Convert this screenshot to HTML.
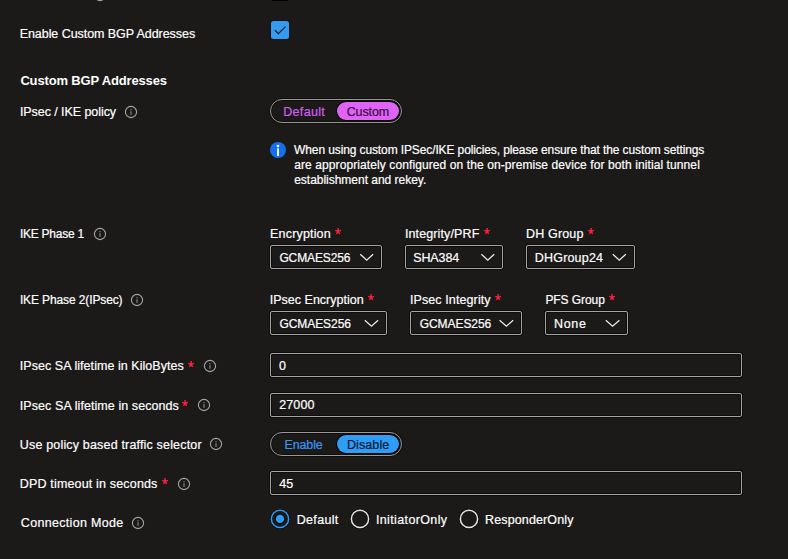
<!DOCTYPE html>
<html><head><meta charset="utf-8"><style>
html,body{margin:0;padding:0;}
body{width:788px;height:559px;overflow:hidden;background:#1b1a19;position:relative;font-family:"Liberation Sans", sans-serif;color:#fff;}
.a{position:absolute;}
.t{position:absolute;line-height:20px;white-space:nowrap;-webkit-text-stroke-width:0.2px;}
</style></head><body>
<div class="a" style="left:271px;top:-17px;width:18px;height:18px;background:#000;border-radius:3px;"></div>
<svg class="a" style="left:92.5px;top:-12px" width="14" height="14" viewBox="0 0 14 14"><circle cx="7" cy="7" r="5.6" fill="none" stroke="#a8a6a4" stroke-width="1.1"/><rect x="6.45" y="6.2" width="1.1" height="3.6" fill="#8f8d8b"/><circle cx="7" cy="4.7" r="0.65" fill="#8f8d8b"/></svg>
<svg class="a" style="left:270px;top:20px" width="20" height="20" viewBox="0 0 20 20"><rect x="0.5" y="0.5" width="19" height="19" rx="3" fill="#1a0a08"/><rect x="1" y="1" width="18" height="18" rx="2.5" fill="#349bf3"/><path d="M5 10.3 L8.4 13.7 L15.5 6.6" fill="none" stroke="#1b1a19" stroke-width="1.3"/></svg>
<div class="a" style="left:270px;top:99px;width:132px;height:24px;box-sizing:border-box;border:1.5px solid #9a9896;border-radius:12px;box-shadow:0 0 0 1px rgba(0,0,0,.45),inset 0 0 0 1px rgba(0,0,0,.45);"></div>
<div class="a" style="left:337px;top:102px;width:62px;height:18px;background:#df63f5;border-radius:9px;box-shadow:0 0 0 1px #000;"></div>
<svg class="a" style="left:270px;top:142px" width="16" height="16" viewBox="0 0 16 16"><circle cx="8" cy="8" r="8" fill="#1270ec"/><rect x="7.05" y="6.4" width="1.9" height="7.6" fill="#fff"/><circle cx="8" cy="4" r="1.35" fill="#fff"/></svg>
<div class="a" style="left:270px;top:245px;width:112px;height:24px;box-sizing:border-box;border:1px solid #a6a4a2;border-radius:2px;box-shadow:0 0 0 1px rgba(0,0,0,.5),inset 0 0 0 1px rgba(0,0,0,.5);"></div>
<div class="a" style="left:405px;top:245px;width:98px;height:24px;box-sizing:border-box;border:1px solid #a6a4a2;border-radius:2px;box-shadow:0 0 0 1px rgba(0,0,0,.5),inset 0 0 0 1px rgba(0,0,0,.5);"></div>
<div class="a" style="left:526px;top:245px;width:109px;height:24px;box-sizing:border-box;border:1px solid #a6a4a2;border-radius:2px;box-shadow:0 0 0 1px rgba(0,0,0,.5),inset 0 0 0 1px rgba(0,0,0,.5);"></div>
<div class="a" style="left:270px;top:311px;width:117px;height:24px;box-sizing:border-box;border:1px solid #a6a4a2;border-radius:2px;box-shadow:0 0 0 1px rgba(0,0,0,.5),inset 0 0 0 1px rgba(0,0,0,.5);"></div>
<div class="a" style="left:410px;top:311px;width:112px;height:24px;box-sizing:border-box;border:1px solid #a6a4a2;border-radius:2px;box-shadow:0 0 0 1px rgba(0,0,0,.5),inset 0 0 0 1px rgba(0,0,0,.5);"></div>
<div class="a" style="left:545px;top:311px;width:83px;height:24px;box-sizing:border-box;border:1px solid #a6a4a2;border-radius:2px;box-shadow:0 0 0 1px rgba(0,0,0,.5),inset 0 0 0 1px rgba(0,0,0,.5);"></div>
<svg class="a" style="left:0;top:0" width="788" height="559" viewBox="0 0 788 559"><path d="M360.3 254.2 L366.7 260.2 L373.09999999999997 254.2 M481.40000000000003 254.2 L487.8 260.2 L494.2 254.2 M612.8 254.2 L619.3 260.2 L625.8000000000001 254.2 M364.8 320.2 L371.45 326.2 L378.09999999999997 320.2 M499.6 320.2 L506.4 326.2 L513.2 320.2 M605.8 320.2 L612.6 326.2 L619.4000000000001 320.2" fill="none" stroke="#ededed" stroke-width="1.25"/></svg>
<div class="a" style="left:270px;top:353px;width:472px;height:24px;box-sizing:border-box;border:1px solid #a6a4a2;border-radius:2px;box-shadow:0 0 0 1px rgba(0,0,0,.5),inset 0 0 0 1px rgba(0,0,0,.5);"></div>
<div class="a" style="left:270px;top:393px;width:472px;height:24px;box-sizing:border-box;border:1px solid #a6a4a2;border-radius:2px;box-shadow:0 0 0 1px rgba(0,0,0,.5),inset 0 0 0 1px rgba(0,0,0,.5);"></div>
<div class="a" style="left:270px;top:471px;width:472px;height:24px;box-sizing:border-box;border:1px solid #a6a4a2;border-radius:2px;box-shadow:0 0 0 1px rgba(0,0,0,.5),inset 0 0 0 1px rgba(0,0,0,.5);"></div>
<div class="a" style="left:270px;top:432px;width:132px;height:24px;box-sizing:border-box;border:1.5px solid #9a9896;border-radius:12px;box-shadow:0 0 0 1px rgba(0,0,0,.45),inset 0 0 0 1px rgba(0,0,0,.45);"></div>
<div class="a" style="left:337px;top:435px;width:62px;height:18px;background:#2f9cf6;border-radius:9px;box-shadow:0 0 0 1px #000;"></div>
<svg class="a" style="left:270px;top:509px" width="20" height="20" viewBox="0 0 20 20"><circle cx="10" cy="10" r="8.9" fill="none" stroke="#000" stroke-opacity=".5" stroke-width="2.6"/><circle cx="10" cy="9.9" r="8.6" fill="none" stroke="#2f9bf5" stroke-width="1.5"/><circle cx="10" cy="9.9" r="5.3" fill="#000" fill-opacity=".45"/><circle cx="10" cy="9.9" r="4.2" fill="#2f9bf5"/></svg>
<svg class="a" style="left:350px;top:509px" width="20" height="20" viewBox="0 0 20 20"><circle cx="10" cy="10" r="8.9" fill="none" stroke="#000" stroke-opacity=".5" stroke-width="2.6"/><circle cx="10" cy="9.9" r="8.6" fill="none" stroke="#e6e6e6" stroke-width="1.5"/></svg>
<svg class="a" style="left:459px;top:509px" width="20" height="20" viewBox="0 0 20 20"><circle cx="10" cy="10" r="8.9" fill="none" stroke="#000" stroke-opacity=".5" stroke-width="2.6"/><circle cx="10" cy="9.9" r="8.6" fill="none" stroke="#e6e6e6" stroke-width="1.5"/></svg>
<svg class="a" style="left:124px;top:104.7px" width="14" height="14" viewBox="0 0 14 14"><circle cx="7" cy="7" r="5.6" fill="none" stroke="#a8a6a4" stroke-width="1.1"/><rect x="6.45" y="6.2" width="1.1" height="3.6" fill="#8f8d8b"/><circle cx="7" cy="4.7" r="0.65" fill="#8f8d8b"/></svg>
<svg class="a" style="left:93px;top:227px" width="14" height="14" viewBox="0 0 14 14"><circle cx="7" cy="7" r="5.6" fill="none" stroke="#a8a6a4" stroke-width="1.1"/><rect x="6.45" y="6.2" width="1.1" height="3.6" fill="#8f8d8b"/><circle cx="7" cy="4.7" r="0.65" fill="#8f8d8b"/></svg>
<svg class="a" style="left:130px;top:293px" width="14" height="14" viewBox="0 0 14 14"><circle cx="7" cy="7" r="5.6" fill="none" stroke="#a8a6a4" stroke-width="1.1"/><rect x="6.45" y="6.2" width="1.1" height="3.6" fill="#8f8d8b"/><circle cx="7" cy="4.7" r="0.65" fill="#8f8d8b"/></svg>
<svg class="a" style="left:202.7px;top:359.2px" width="14" height="14" viewBox="0 0 14 14"><circle cx="7" cy="7" r="5.6" fill="none" stroke="#a8a6a4" stroke-width="1.1"/><rect x="6.45" y="6.2" width="1.1" height="3.6" fill="#8f8d8b"/><circle cx="7" cy="4.7" r="0.65" fill="#8f8d8b"/></svg>
<svg class="a" style="left:197.1px;top:398px" width="14" height="14" viewBox="0 0 14 14"><circle cx="7" cy="7" r="5.6" fill="none" stroke="#a8a6a4" stroke-width="1.1"/><rect x="6.45" y="6.2" width="1.1" height="3.6" fill="#8f8d8b"/><circle cx="7" cy="4.7" r="0.65" fill="#8f8d8b"/></svg>
<svg class="a" style="left:209.1px;top:437px" width="14" height="14" viewBox="0 0 14 14"><circle cx="7" cy="7" r="5.6" fill="none" stroke="#a8a6a4" stroke-width="1.1"/><rect x="6.45" y="6.2" width="1.1" height="3.6" fill="#8f8d8b"/><circle cx="7" cy="4.7" r="0.65" fill="#8f8d8b"/></svg>
<svg class="a" style="left:176.7px;top:476.6px" width="14" height="14" viewBox="0 0 14 14"><circle cx="7" cy="7" r="5.6" fill="none" stroke="#a8a6a4" stroke-width="1.1"/><rect x="6.45" y="6.2" width="1.1" height="3.6" fill="#8f8d8b"/><circle cx="7" cy="4.7" r="0.65" fill="#8f8d8b"/></svg>
<svg class="a" style="left:130.9px;top:515.6px" width="14" height="14" viewBox="0 0 14 14"><circle cx="7" cy="7" r="5.6" fill="none" stroke="#a8a6a4" stroke-width="1.1"/><rect x="6.45" y="6.2" width="1.1" height="3.6" fill="#8f8d8b"/><circle cx="7" cy="4.7" r="0.65" fill="#8f8d8b"/></svg>
<div class="t" style="left:19.7px;top:24px;font-size:12.5px;font-weight:400;letter-spacing:-0.058px;color:#ffffff">Enable Custom BGP Addresses</div>
<div class="t" style="left:20.4px;top:71px;font-size:13px;font-weight:700;letter-spacing:-0.157px;color:#ffffff;-webkit-text-stroke-width:0">Custom BGP Addresses</div>
<div class="t" style="left:19.9px;top:102px;font-size:12.5px;font-weight:400;letter-spacing:-0.061px;color:#ffffff">IPsec / IKE policy</div>
<div class="t" style="left:283.2px;top:102px;font-size:12.5px;font-weight:400;letter-spacing:0.334px;color:#d45ef0">Default</div>
<div class="t" style="left:346.7px;top:102px;font-size:12.5px;font-weight:400;letter-spacing:-0.1px;color:#3b0a45">Custom</div>
<div class="t" style="left:294.1px;top:140px;font-size:12px;font-weight:400;letter-spacing:-0.115px;color:#ffffff">When using custom IPSec/IKE policies, please ensure that the custom settings</div>
<div class="t" style="left:294.2px;top:155px;font-size:12px;font-weight:400;letter-spacing:0.097px;color:#ffffff">are appropriately configured on the on-premise device for both initial tunnel</div>
<div class="t" style="left:294.2px;top:170px;font-size:12px;font-weight:400;letter-spacing:-0.021px;color:#ffffff">establishment and rekey.</div>
<div class="t" style="left:19.9px;top:224px;font-size:12px;font-weight:400;letter-spacing:-0.25px;color:#ffffff">IKE Phase 1</div>
<div class="t" style="left:270.1px;top:224px;font-size:12.5px;font-weight:400;letter-spacing:0.166px;color:#ffffff">Encryption</div>
<div class="t" style="left:404.9px;top:224px;font-size:12.5px;font-weight:400;letter-spacing:0.125px;color:#ffffff">Integrity/PRF</div>
<div class="t" style="left:526.1px;top:224px;font-size:12.5px;font-weight:400;letter-spacing:0.144px;color:#ffffff">DH Group</div>
<div class="t" style="left:279.4px;top:248px;font-size:12px;font-weight:400;letter-spacing:-0.125px;color:#ffffff">GCMAES256</div>
<div class="t" style="left:413.2px;top:248px;font-size:12.5px;font-weight:400;letter-spacing:-0.1px;color:#ffffff">SHA384</div>
<div class="t" style="left:534.8px;top:248px;font-size:12.5px;font-weight:400;letter-spacing:0.185px;color:#ffffff">DHGroup24</div>
<div class="t" style="left:19.9px;top:290px;font-size:12px;font-weight:400;letter-spacing:-0.117px;color:#ffffff">IKE Phase 2(IPsec)</div>
<div class="t" style="left:269.8px;top:290px;font-size:12.5px;font-weight:400;letter-spacing:0.001px;color:#ffffff">IPsec Encryption</div>
<div class="t" style="left:409.9px;top:290px;font-size:12.5px;font-weight:400;letter-spacing:0.108px;color:#ffffff">IPsec Integrity</div>
<div class="t" style="left:545.4px;top:290px;font-size:12px;font-weight:400;letter-spacing:-0.065px;color:#ffffff">PFS Group</div>
<div class="t" style="left:279.4px;top:314px;font-size:12px;font-weight:400;letter-spacing:-0.06px;color:#ffffff">GCMAES256</div>
<div class="t" style="left:419.7px;top:314px;font-size:12px;font-weight:400;letter-spacing:-0.06px;color:#ffffff">GCMAES256</div>
<div class="t" style="left:554.0px;top:314px;font-size:12.5px;font-weight:400;letter-spacing:0.667px;color:#ffffff">None</div>
<div class="t" style="left:19.8px;top:356px;font-size:12.5px;font-weight:400;letter-spacing:0.05px;color:#ffffff">IPsec SA lifetime in KiloBytes</div>
<div class="t" style="left:278.9px;top:356px;font-size:12.5px;font-weight:400;letter-spacing:0.0px;color:#ffffff">0</div>
<div class="t" style="left:19.8px;top:396px;font-size:12.5px;font-weight:400;letter-spacing:0.076px;color:#ffffff">IPsec SA lifetime in seconds</div>
<div class="t" style="left:279.2px;top:395px;font-size:12.5px;font-weight:400;letter-spacing:0.125px;color:#ffffff">27000</div>
<div class="t" style="left:19.8px;top:435px;font-size:12.5px;font-weight:400;letter-spacing:0.173px;color:#ffffff">Use policy based traffic selector</div>
<div class="t" style="left:284.4px;top:435px;font-size:12.5px;font-weight:400;letter-spacing:-0.1px;color:#3a96f0">Enable</div>
<div class="t" style="left:347.0px;top:435px;font-size:12.5px;font-weight:400;letter-spacing:0.085px;color:#081830">Disable</div>
<div class="t" style="left:19.8px;top:474px;font-size:12.5px;font-weight:400;letter-spacing:0.166px;color:#ffffff">DPD timeout in seconds</div>
<div class="t" style="left:279.3px;top:474px;font-size:12.5px;font-weight:400;letter-spacing:0.0px;color:#ffffff">45</div>
<div class="t" style="left:20.8px;top:513px;font-size:12.5px;font-weight:400;letter-spacing:0.321px;color:#ffffff">Connection Mode</div>
<div class="t" style="left:296.7px;top:510px;font-size:12.5px;font-weight:400;letter-spacing:0.333px;color:#ffffff">Default</div>
<div class="t" style="left:375.9px;top:510px;font-size:12.5px;font-weight:400;letter-spacing:0.375px;color:#ffffff">InitiatorOnly</div>
<div class="t" style="left:485.1px;top:510px;font-size:12.5px;font-weight:400;letter-spacing:0.125px;color:#ffffff">ResponderOnly</div>
<svg class="a" style="left:333.9px;top:227px" width="9" height="9" viewBox="0 0 9 9"><path d="M4.1 4.3 V1.1 M4.1 4.3 L1.2 3.4 M4.1 4.3 L7.0 3.4 M4.1 4.3 L2.5 6.8 M4.1 4.3 L5.7 6.8" fill="none" stroke="#ff1f3d" stroke-width="1.4"/></svg>
<svg class="a" style="left:483px;top:227px" width="9" height="9" viewBox="0 0 9 9"><path d="M4.1 4.3 V1.1 M4.1 4.3 L1.2 3.4 M4.1 4.3 L7.0 3.4 M4.1 4.3 L2.5 6.8 M4.1 4.3 L5.7 6.8" fill="none" stroke="#ff1f3d" stroke-width="1.4"/></svg>
<svg class="a" style="left:587.2px;top:227px" width="9" height="9" viewBox="0 0 9 9"><path d="M4.1 4.3 V1.1 M4.1 4.3 L1.2 3.4 M4.1 4.3 L7.0 3.4 M4.1 4.3 L2.5 6.8 M4.1 4.3 L5.7 6.8" fill="none" stroke="#ff1f3d" stroke-width="1.4"/></svg>
<svg class="a" style="left:366.9px;top:293px" width="9" height="9" viewBox="0 0 9 9"><path d="M4.1 4.3 V1.1 M4.1 4.3 L1.2 3.4 M4.1 4.3 L7.0 3.4 M4.1 4.3 L2.5 6.8 M4.1 4.3 L5.7 6.8" fill="none" stroke="#ff1f3d" stroke-width="1.4"/></svg>
<svg class="a" style="left:494px;top:293px" width="9" height="9" viewBox="0 0 9 9"><path d="M4.1 4.3 V1.1 M4.1 4.3 L1.2 3.4 M4.1 4.3 L7.0 3.4 M4.1 4.3 L2.5 6.8 M4.1 4.3 L5.7 6.8" fill="none" stroke="#ff1f3d" stroke-width="1.4"/></svg>
<svg class="a" style="left:608px;top:293px" width="9" height="9" viewBox="0 0 9 9"><path d="M4.1 4.3 V1.1 M4.1 4.3 L1.2 3.4 M4.1 4.3 L7.0 3.4 M4.1 4.3 L2.5 6.8 M4.1 4.3 L5.7 6.8" fill="none" stroke="#ff1f3d" stroke-width="1.4"/></svg>
<svg class="a" style="left:186.9px;top:360px" width="9" height="9" viewBox="0 0 9 9"><path d="M4.1 4.3 V1.1 M4.1 4.3 L1.2 3.4 M4.1 4.3 L7.0 3.4 M4.1 4.3 L2.5 6.8 M4.1 4.3 L5.7 6.8" fill="none" stroke="#ff1f3d" stroke-width="1.4"/></svg>
<svg class="a" style="left:180.8px;top:399px" width="9" height="9" viewBox="0 0 9 9"><path d="M4.1 4.3 V1.1 M4.1 4.3 L1.2 3.4 M4.1 4.3 L7.0 3.4 M4.1 4.3 L2.5 6.8 M4.1 4.3 L5.7 6.8" fill="none" stroke="#ff1f3d" stroke-width="1.4"/></svg>
<svg class="a" style="left:160.5px;top:477px" width="9" height="9" viewBox="0 0 9 9"><path d="M4.1 4.3 V1.1 M4.1 4.3 L1.2 3.4 M4.1 4.3 L7.0 3.4 M4.1 4.3 L2.5 6.8 M4.1 4.3 L5.7 6.8" fill="none" stroke="#ff1f3d" stroke-width="1.4"/></svg>
</body></html>
